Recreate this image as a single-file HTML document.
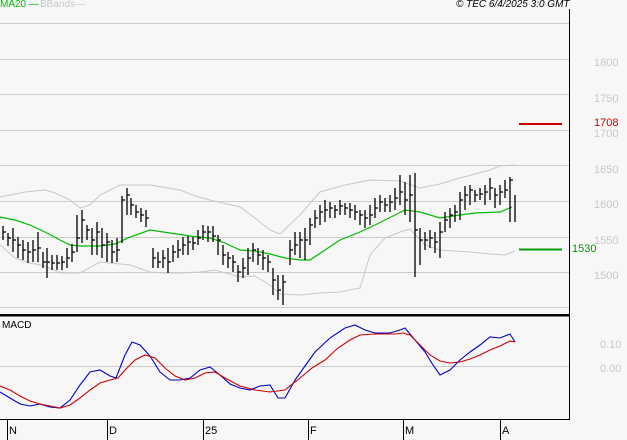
<!DOCTYPE html>
<html><head><style>
html,body{margin:0;padding:0;background:#f7f7f7;}
body{width:627px;height:440px;overflow:hidden;position:relative;font-family:"Liberation Sans",sans-serif;}
.t{position:absolute;font-size:11px;color:#c8c8c8;}
</style></head><body>
<svg width="627" height="440" style="position:absolute;left:0;top:0" xmlns="http://www.w3.org/2000/svg">
<rect width="627" height="440" fill="#f7f7f7"/>
<g stroke="#cccccc" stroke-width="1">
<path d="M0 23.5H569M0 59.5H569M0 94.5H569M0 130.5H569M0 165.5H569M0 201.5H569M0 237.5H569M0 272.5H569M0 307.5H569M0 366.5H569"/>
</g>
<path d="M569.5 9V419.5H0" stroke="#000" fill="none"/>
<rect x="0" y="314" width="570" height="2.5" fill="#000"/>
<path d="M7.5 419V440M107.5 419V440M203.5 419V440M308.5 419V440M403.5 419V440M500.5 419V440" stroke="#000"/>
<path d="M519 124H562" stroke="#cc0000" stroke-width="2"/>
<path d="M519 249.5H562" stroke="#009900" stroke-width="2"/>
<g fill="none" stroke="#c8c8c8">
<polyline points="0,197 25,192 45,190 55,193 70,200 80,208 90,205 100,195 120,185 150,185 180,190 195,196 210,200 240,207 255,218 270,230 280,234 300,215 320,192 345,185 370,180 400,181 420,188 440,184 460,178 475,174 490,170 500,166 515,165"/>
<polyline points="0,245 15,258 30,263 45,266 60,273 80,273 100,262 130,265 150,272 165,273 180,273 200,272 215,270 240,277 255,276 270,285 280,294 300,295 320,293 340,292 360,288 370,255 385,238 400,232 410,229 425,245 440,250 470,252 490,254 505,255 515,251"/>
</g>
<polyline fill="none" stroke="#00bb00" stroke-width="1.2" points="0,217 15,220 30,225 45,232 60,240 70,245 80,246 100,246 115,244 130,237 150,230 170,233 190,236 210,238 225,243 240,250 255,251 270,254 285,258 300,260 310,260 325,250 340,240 360,232 375,225 395,215 405,210 420,212 440,218 460,215 475,213 500,212 512,207"/>
<g stroke="#000" stroke-width="1.3" fill="none">
<path d="M3 226V240M3 232h3M8 233V246M8 238h3M13 228V252M13 240h3M18 237V258M18 245h3M23 240V260M23 250h3M28 242V263M28 252h3M33 240V262M33 250h3M38 232V262M38 248h3M43 252V268M43 262h3M47 248V278M47 262h3M52 255V270M52 263h3M57 255V270M57 263h3M62 256V270M62 262h3M67 248V268M67 258h3M72 244V262M72 252h3M77 215V252M77 238h3M82 210V243M82 220h3M87 225V240M87 230h3M92 228V255M92 240h3M97 222V255M97 232h3M102 228V258M102 245h3M107 233V262M107 242h3M112 240V263M112 252h3M117 238V262M117 250h3M122 196V243M122 200h3M127 188V215M127 195h3M131 198V215M131 205h3M136 205V218M136 212h3M141 208V222M141 215h3M146 210V227M146 218h3M153 248V268M153 258h3M158 252V268M158 262h3M163 250V268M163 258h3M168 248V273M168 262h3M173 245V262M173 252h3M178 240V258M178 250h3M183 237V255M183 245h3M188 236V255M188 242h3M193 237V250M193 243h3M198 230V245M198 238h3M203 225V240M203 232h3M208 226V242M208 232h3M213 226V242M213 236h3M218 235V255M218 240h3M223 245V265M223 255h3M228 252V268M228 258h3M233 255V272M233 262h3M238 265V282M238 272h3M243 258V278M243 268h3M248 248V275M248 258h3M253 243V262M253 250h3M258 248V265M258 255h3M263 250V270M263 258h3M268 255V272M268 262h3M273 268V295M273 280h3M278 275V300M278 290h3M283 275V305M283 282h3M290 240V265M290 250h3M295 232V255M295 245h3M300 232V258M300 240h3M305 228V260M305 240h3M310 218V245M310 225h3M315 210V228M315 218h3M320 205V225M320 212h3M325 200V222M325 210h3M330 202V218M330 208h3M335 205V218M335 210h3M340 200V215M340 206h3M345 203V215M345 208h3M350 203V218M350 210h3M355 205V220M355 212h3M360 210V225M360 215h3M365 210V228M365 218h3M370 205V225M370 215h3M375 198V218M375 208h3M380 195V212M380 202h3M385 198V212M385 205h3M390 195V212M390 202h3M395 188V210M395 198h3M400 175V205M400 192h3M405 182V215M405 200h3M410 175V222M410 195h3M415 173V277M415 230h3M420 228V265M420 240h3M425 232V250M425 240h3M430 230V248M430 238h3M435 232V253M435 242h3M440 222V258M440 232h3M445 212V232M445 220h3M450 208V228M450 215h3M455 205V222M455 212h3M460 192V220M460 200h3M465 186V210M465 195h3M470 185V205M470 190h3M475 190V202M475 195h3M480 188V200M480 194h3M485 185V205M485 192h3M490 178V200M490 188h3M495 188V208M495 195h3M500 185V205M500 192h3M505 180V198M505 190h3M510 177V222M510 180h3M515 195V222"/>
</g>
<polyline fill="none" stroke="#0000cc" stroke-width="1.1" points="0,392 10,398 20,404 30,406 40,404 50,407 60,408 70,400 80,385 90,372 100,370 110,376 116,378 125,355 132,342 140,345 150,356 160,372 170,380 180,380 190,378 200,370 210,367 220,375 230,384 240,388 250,390 260,386 270,385 278,398 285,398 295,380 305,366 315,352 330,338 345,328 355,325 365,330 375,333 390,333 400,330 405,328 415,340 425,352 433,365 440,375 450,370 460,360 470,352 480,345 490,337 500,338 510,334 515,342"/>
<polyline fill="none" stroke="#cc0000" stroke-width="1.1" points="0,386 10,390 20,396 30,401 40,404 50,406 60,408 70,405 80,398 90,390 100,383 110,380 118,378 125,370 135,360 145,355 155,358 165,368 175,376 185,380 195,378 205,373 215,372 225,378 240,386 255,390 270,392 285,390 300,378 312,368 325,360 338,348 350,340 360,335 375,334 395,334 403,333 410,335 420,345 430,355 440,361 450,363 460,362 470,359 480,355 490,350 500,346 510,341 515,342"/>
</svg>
<div class="t" style="left:0;top:-1px;font-size:10px;color:#00bb00">MA20 —</div>
<div class="t" style="left:40px;top:-1px;font-size:10px;color:#c8c8c8">BBands—</div>
<div class="t" style="left:456px;top:-1px;font-size:10px;color:#000;font-style:italic">© TEC 6/4/2025 3:0 GMT</div>
<div class="t" style="left:594px;top:57px">1800</div>
<div class="t" style="left:594px;top:93px">1750</div>
<div class="t" style="left:594px;top:128px">1700</div>
<div class="t" style="left:594px;top:117px;color:#cc0000">1708</div>
<div class="t" style="left:594px;top:164px">1650</div>
<div class="t" style="left:594px;top:199px">1600</div>
<div class="t" style="left:594px;top:235px">1550</div>
<div class="t" style="left:572px;top:243px;color:#009900">1530</div>
<div class="t" style="left:594px;top:270px">1500</div>
<div class="t" style="left:600px;top:339px">0.10</div>
<div class="t" style="left:600px;top:363px">0.00</div>
<div class="t" style="left:2px;top:320px;font-size:10px;color:#000">MACD</div>
<div class="t" style="left:9px;top:425px;color:#000">N</div>
<div class="t" style="left:109px;top:425px;color:#000">D</div>
<div class="t" style="left:205px;top:425px;color:#000">25</div>
<div class="t" style="left:310px;top:425px;color:#000">F</div>
<div class="t" style="left:405px;top:425px;color:#000">M</div>
<div class="t" style="left:502px;top:425px;color:#000">A</div>
</body></html>
